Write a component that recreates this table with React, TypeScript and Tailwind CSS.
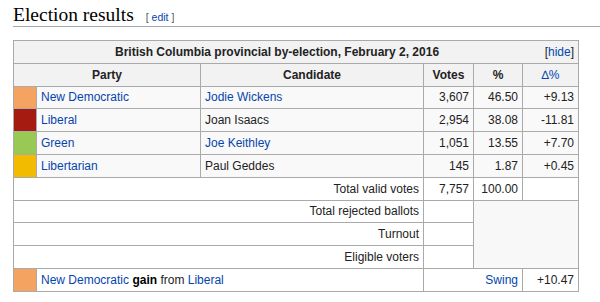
const link = 'text-[#0645ad]'

const rows = [
  { color: 'bg-[#f4a460]', party: 'New Democratic', candidate: 'Jodie Wickens', candLink: true, votes: '3,607', pct: '46.50', delta: '+9.13' },
  { color: 'bg-[#a51b12]', party: 'Liberal', candidate: 'Joan Isaacs', candLink: false, votes: '2,954', pct: '38.08', delta: '-11.81' },
  { color: 'bg-[#99c955]', party: 'Green', candidate: 'Joe Keithley', candLink: true, votes: '1,051', pct: '13.55', delta: '+7.70' },
  { color: 'bg-[#f3bb00]', party: 'Libertarian', candidate: 'Paul Geddes', candLink: false, votes: '145', pct: '1.87', delta: '+0.45' },
]

const cell = 'border border-[#aaa] px-[4px] py-0'

export default function App() {
  return (
    <div className="w-[600px] h-[302px] bg-white pl-[13px] font-['Liberation_Sans',Arial,sans-serif] text-[#222] overflow-hidden">
      {/* Section heading */}
      <div className="flex items-baseline border-b border-[#a2a9b1] pt-[4px]">
        <h2 className="font-['Liberation_Serif','Times_New_Roman',serif] text-[19.5px] leading-[22px] text-black">
          Election results
        </h2>
        <span className="ml-3 text-[10.5px] text-[#54595d]">
          [ <span className={link}>edit</span> ]
        </span>
      </div>

      <table className="mt-[13px] w-[565px] table-fixed border-collapse text-[12px] leading-[14px] bg-[#f9f9f9] border border-[#aaa]">
        <colgroup>
          <col className="w-[23px]" />
          <col className="w-[164px]" />
          <col className="w-[223px]" />
          <col className="w-[50px]" />
          <col className="w-[49px]" />
          <col className="w-[56px]" />
        </colgroup>
        <tbody>
          <tr className="h-[22.8px] bg-[#f2f2f2]">
            <th colSpan={6} className={cell}>
              <div className="flex items-center">
                <span className="flex-1 text-center font-bold">
                  British Columbia provincial by-election, February 2, 2016
                </span>
                <span className="w-[38px] text-right font-normal">
                  [<span className={link}>hide</span>]
                </span>
              </div>
            </th>
          </tr>
          <tr className="h-[22.8px] bg-[#f2f2f2] font-bold">
            <th colSpan={2} className={cell}>Party</th>
            <th className={cell}>Candidate</th>
            <th className={cell}>Votes</th>
            <th className={cell}>%</th>
            <th className={`${cell} ${link} font-normal`}>∆%</th>
          </tr>
          {rows.map((r) => (
            <tr key={r.party} className="h-[22.8px]">
              <td className={`${cell} ${r.color}`} />
              <td className={`${cell} ${link}`}>{r.party}</td>
              <td className={`${cell} ${r.candLink ? link : ''}`}>{r.candidate}</td>
              <td className={`${cell} text-right`}>{r.votes}</td>
              <td className={`${cell} text-right`}>{r.pct}</td>
              <td className={`${cell} text-right`}>{r.delta}</td>
            </tr>
          ))}
          <tr className="h-[22.8px] bg-white">
            <td colSpan={3} className={`${cell} text-right`}>Total valid votes</td>
            <td className={`${cell} text-right`}>7,757</td>
            <td className={`${cell} text-right`}>100.00</td>
            <td className={cell} />
          </tr>
          <tr className="h-[22.8px]">
            <td colSpan={3} className={`${cell} text-right bg-white`}>Total rejected ballots</td>
            <td className={`${cell} bg-white`} />
            <td colSpan={2} rowSpan={3} className={`${cell} bg-[#f8f8f8]`} />
          </tr>
          <tr className="h-[22.8px]">
            <td colSpan={3} className={`${cell} text-right bg-white`}>Turnout</td>
            <td className={`${cell} bg-white`} />
          </tr>
          <tr className="h-[22.8px]">
            <td colSpan={3} className={`${cell} text-right bg-white`}>Eligible voters</td>
            <td className={`${cell} bg-white`} />
          </tr>
          <tr className="h-[22.8px] bg-white">
            <td className={`${cell} bg-[#f4a460]`} />
            <td colSpan={2} className={cell}>
              <span className={link}>New Democratic</span> <b className="text-black">gain</b> from{' '}
              <span className={link}>Liberal</span>
            </td>
            <td colSpan={2} className={`${cell} text-right ${link}`}>Swing</td>
            <td className={`${cell} text-right`}>+10.47</td>
          </tr>
        </tbody>
      </table>
    </div>
  )
}
